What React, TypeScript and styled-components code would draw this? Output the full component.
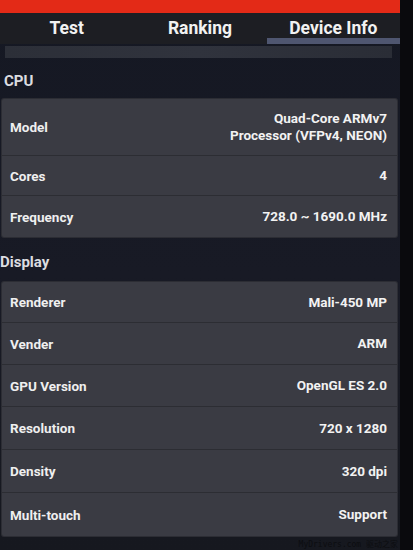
import React from "react";
import styled, { createGlobalStyle } from "styled-components";

type Row = { label: string; value: React.ReactNode; h: number };

const cpuRows: Row[] = [
  {
    label: "Model",
    value: (
      <>
        Quad-Core ARMv7
        <br />
        Processor (VFPv4, NEON)
      </>
    ),
    h: 57,
  },
  { label: "Cores", value: "4", h: 40 },
  { label: "Frequency", value: "728.0 ~ 1690.0 MHz", h: 41 },
];

const displayRows: Row[] = [
  { label: "Renderer", value: "Mali-450 MP", h: 41 },
  { label: "Vender", value: "ARM", h: 42 },
  { label: "GPU Version", value: "OpenGL ES 2.0", h: 42 },
  { label: "Resolution", value: "720 x 1280", h: 43 },
  { label: "Density", value: "320 dpi", h: 43 },
  { label: "Multi-touch", value: "Support", h: 43 },
];

const tabs = ["Test", "Ranking", "Device Info"];

const App = () => {
  return (
    <>
      <GlobalStyle />
      <Frame>
        <Screen>
          <TopBar />
          <TabBar>
            {tabs.map((t, i) => (
              <Tab key={t} active={i === 2}>
                {t}
              </Tab>
            ))}
          </TabBar>
          <Shade />
          <SectionTitle indent={4} h={41} top={4}>
            CPU
          </SectionTitle>
          <Card>
            {cpuRows.map((r) => (
              <InfoRow key={r.label} h={r.h}>
                <Label>{r.label}</Label>
                <Value>{r.value}</Value>
              </InfoRow>
            ))}
          </Card>
          <SectionTitle indent={0} h={45} top={4}>
            Display
          </SectionTitle>
          <Card>
            {displayRows.map((r) => (
              <InfoRow key={r.label} h={r.h}>
                <Label>{r.label}</Label>
                <Value>{r.value}</Value>
              </InfoRow>
            ))}
          </Card>
          <Footer>
            <Watermark>MyDrivers.com 驱动之家</Watermark>
          </Footer>
        </Screen>
        <Bezel />
      </Frame>
    </>
  );
};

const GlobalStyle = createGlobalStyle`
  html, body {
    margin: 0;
    padding: 0;
    background: #0b0b0e;
  }
  body {
    font-family: Roboto, "Liberation Sans", sans-serif;
  }
`;

const Frame = styled.div`
  display: flex;
  width: 413px;
  height: 550px;
  overflow: hidden;
`;

const Screen = styled.div`
  width: 400px;
  display: flex;
  flex-direction: column;
  background: linear-gradient(180deg, #151823 0%, #181a25 50%, #16181f 100%);
`;

const Bezel = styled.div`
  flex: 1;
  background: #0a0a0d;
`;

const TopBar = styled.div`
  height: 13px;
  background: #e32a17;
`;

const TabBar = styled.div`
  height: 31px;
  display: grid;
  grid-template-columns: 1fr 1fr 1fr;
  background: #1d1e23;
`;

const Tab = styled.div<{ active?: boolean }>`
  display: flex;
  align-items: center;
  justify-content: center;
  padding-top: 6px;
  color: #f2f2f2;
  font-size: 17.5px;
  font-weight: bold;
  line-height: 1;
  border-bottom: 6px solid ${(p) => (p.active ? "#4f5670" : "transparent")};
  box-sizing: border-box;
`;

const Shade = styled.div`
  height: 12px;
  margin: 2px 8px 0 5px;
  background: linear-gradient(90deg, #2c2f38, #30333d 50%, #2a2d36);
`;

const SectionTitle = styled.div<{ indent: number; h: number; top: number }>`
  height: ${(p) => p.h}px;
  display: flex;
  align-items: center;
  padding: ${(p) => p.top}px 0 0 ${(p) => p.indent}px;
  color: #dcdde0;
  font-size: 15px;
  font-weight: bold;
  box-sizing: border-box;
`;

const Card = styled.div`
  margin: 0 3px 0 2px;
  background: #3a3b43;
  border-radius: 2px;
  box-shadow: 0 0 0 1px #2c2d34;
`;

const InfoRow = styled.div<{ h: number }>`
  height: ${(p) => p.h}px;
  display: flex;
  align-items: center;
  justify-content: space-between;
  padding: 0 10px 0 8px;
  border-bottom: 1px solid #2c2d33;
  box-sizing: border-box;
  &:last-child {
    border-bottom: none;
  }
`;

const Label = styled.div`
  color: #efefef;
  font-size: 13.5px;
  font-weight: bold;
`;

const Value = styled.div`
  color: #f2f2f2;
  font-size: 13.5px;
  font-weight: bold;
  text-align: right;
  line-height: 17px;
`;

const Footer = styled.div`
  flex: 1;
  display: flex;
  align-items: center;
  justify-content: flex-end;
  padding-right: 2px;
`;

const Watermark = styled.div`
  color: #0c0d10;
  font-family: "DejaVu Sans Mono", "Noto Sans CJK SC", monospace;
  font-size: 8px;
`;

export default App;
